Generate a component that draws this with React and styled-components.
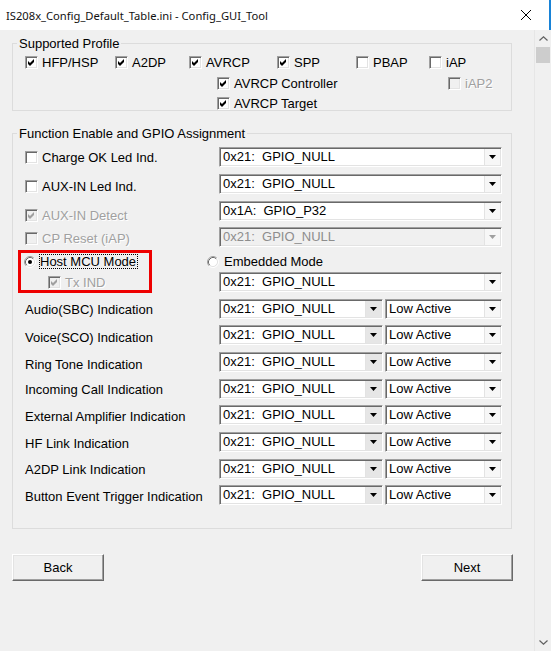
import styled, { createGlobalStyle } from "styled-components";

const GlobalStyle = createGlobalStyle`
  html, body {
    margin: 0;
    padding: 0;
    background: #f0f0f0;
  }
  body {
    font-family: "Liberation Sans", Arial, sans-serif;
    font-size: 13px;
    color: #000;
  }
`;

const Window = styled.div`
  width: 551px;
  height: 651px;
  display: flex;
  flex-direction: column;
  overflow: hidden;
  background: #f0f0f0;
`;

const TitleBar = styled.div`
  height: 30px;
  flex: none;
  display: flex;
  align-items: center;
  background: #fff;
  padding-left: 6px;
  border-right: 2px solid #1883d7;
  box-sizing: border-box;
`;

const Title = styled.div`
  flex: 1;
  font-family: "Noto Sans", sans-serif;
  font-size: 11.2px;
  color: #111;
`;

const CloseButton = styled.div`
  width: 46px;
  height: 30px;
  display: flex;
  align-items: center;
  justify-content: center;
`;

const Body = styled.div`
  flex: 1;
  display: flex;
  min-height: 0;
`;

const Content = styled.div`
  flex: 1;
  padding: 6px 0 0 12px;
`;

const Scrollbar = styled.div`
  width: 17px;
  flex: none;
  display: flex;
  flex-direction: column;
  background: #f0f0f0;
  border-left: 1px solid #e6e6e6;
  box-sizing: border-box;
`;

const ScrollArrow = styled.div`
  height: 17px;
  display: flex;
  align-items: center;
  justify-content: center;
`;

const Thumb = styled.div`
  height: 16px;
  margin: 0 1px;
  background: #cdcdcd;
`;

const Track = styled.div`
  flex: 1;
`;

const GroupBox = styled.fieldset`
  margin: ${(p) => p.$margin || 0};
  width: 500px;
  min-inline-size: 0;
  box-sizing: border-box;
  border: 1px solid #dcdcdc;
  padding: ${(p) => p.$pad};
`;

const Legend = styled.legend`
  padding: 0 2px;
  margin-left: -8px;
  line-height: 15px;
`;

const ProfileRows = styled.div`
  display: flex;
  flex-direction: column;
  gap: 8.5px;
`;

const ProfileRow = styled.div`
  display: flex;
  align-items: center;
  height: 12px;
  padding-left: ${(p) => p.$indent || 0}px;
`;

const CheckItem = styled.label`
  display: flex;
  align-items: center;
  gap: 4px;
  height: 14px;
  width: ${(p) => (p.$w ? `${p.$w}px` : "auto")};
  flex: none;
  color: ${(p) => (p.$disabled ? "#a0a0a0" : "#000")};
  text-shadow: ${(p) => (p.$disabled ? "1px 1px 0 #fff" : "none")};
  white-space: nowrap;
`;

const Box = styled.span`
  width: 13px;
  height: 13px;
  flex: none;
  box-sizing: border-box;
  display: flex;
  align-items: center;
  justify-content: center;
  border: 1px solid;
  border-color: #a0a0a0 #fff #fff #a0a0a0;
  box-shadow: inset 1px 1px 0 #696969, inset -1px -1px 0 #e3e3e3;
  background: ${(p) => (p.$disabled ? "#f0f0f0" : "#fff")};
`;

const Check = ({ label, checked, disabled, w }) => (
  <CheckItem $w={w} $disabled={disabled}>
    <Box $disabled={disabled}>
      {checked && (
        <svg width="7" height="7" viewBox="0 0 7 7">
          <polygon
            points="0,2 2,4 6,0 6,3 2,7 0,5"
            fill={disabled ? "#a0a0a0" : "#000"}
          />
        </svg>
      )}
    </Box>
    {label}
  </CheckItem>
);

const Radio = ({ checked }) => (
  <svg width="12" height="12" viewBox="0 0 12 12" style={{ flex: "none" }}>
    <circle cx="6" cy="6" r="4.5" fill="#fff" />
    <path d="M2.11 9.89 A5.5 5.5 0 0 1 9.89 2.11" fill="none" stroke="#a0a0a0" />
    <path d="M2.82 9.18 A4.5 4.5 0 0 1 9.18 2.82" fill="none" stroke="#696969" />
    <path d="M9.89 2.11 A5.5 5.5 0 0 1 2.11 9.89" fill="none" stroke="#fff" />
    <path d="M9.18 2.82 A4.5 4.5 0 0 1 2.82 9.18" fill="none" stroke="#e3e3e3" />
    {checked && <circle cx="6" cy="6" r="2" fill="#000" />}
  </svg>
);

const RadioItem = styled.label`
  display: flex;
  align-items: center;
  gap: ${(p) => p.$gap || 5}px;
  height: 16px;
  white-space: nowrap;
`;

const FocusText = styled.span`
  border: 1px dotted #000;
  padding: 0 1px 0 0;
  line-height: 13px;
`;

const FormRows = styled.div`
  display: flex;
  flex-direction: column;
  gap: 6.7px;
`;

const FormRow = styled.div`
  display: grid;
  grid-template-columns: 194px 1fr;
  align-items: center;
  height: 20px;
`;

/* labels sit a little below their combo's centre, as in the dialog */
const LabelCell = styled.div`
  display: flex;
  align-items: center;
  padding-top: ${(p) => (p.$dy || 0) * 2}px;
`;

const Label = styled.span`
  white-space: nowrap;
`;

const ModeBlock = styled.div`
  display: grid;
  grid-template-columns: 194px 1fr;
  grid-template-rows: 12px 20px;
  row-gap: 6.2px;
`;

const Highlight = styled.div`
  grid-row: 1 / span 2;
  grid-column: 1;
  justify-self: start;
  width: 134px;
  box-sizing: border-box;
  margin: -4px 0 -1px -7px;
  border: 3px solid #ee0000;
  padding: 1px 0 0 3px;
  display: flex;
  flex-direction: column;
  gap: 5px;
`;

const SubCheck = styled.div`
  height: 16px;
  display: flex;
  align-items: center;
  padding-left: 24px;
`;

const EmbeddedSlot = styled.div`
  grid-row: 1;
  grid-column: 2;
  align-self: start;
  margin: 0 0 0 -12px;
`;

const ComboSlot = styled.div`
  grid-row: 2;
  grid-column: 2;
`;

const ComboPair = styled.div`
  display: flex;
  gap: 2px;
`;

const ComboBox = styled.div`
  width: ${(p) => p.$w}px;
  height: 20px;
  box-sizing: border-box;
  display: flex;
  padding: 1px;
  border: 1px solid;
  border-color: #a0a0a0 #fff #fff #a0a0a0;
  box-shadow: inset 1px 1px 0 #696969, inset -1px -1px 0 #e3e3e3;
  background: ${(p) => (p.$disabled ? "#f0f0f0" : "#fff")};
`;

const ComboText = styled.span`
  flex: 1;
  white-space: pre;
  padding-left: 2px;
  line-height: 16px;
  overflow: hidden;
  color: ${(p) => (p.$disabled ? "#8d8d8d" : "#000")};
`;

const DropButton = styled.span`
  width: 16px;
  flex: none;
  box-sizing: border-box;
  display: flex;
  align-items: center;
  justify-content: center;
  background: ${(p) => (p.$shaded ? "#e6e6e6" : "#f7f7f7")};
  border-left: 1px solid #e3e3e3;
`;

const Combo = ({ value, w = 283, disabled, shaded }) => (
  <ComboBox $w={w} $disabled={disabled}>
    <ComboText $disabled={disabled}>{value}</ComboText>
    <DropButton $shaded={shaded}>
      <svg width="7" height="4" viewBox="0 0 7 4">
        <polygon points="0,0 7,0 3.5,4" fill={disabled ? "#a0a0a0" : "#000"} />
      </svg>
    </DropButton>
  </ComboBox>
);

const ButtonBar = styled.div`
  width: 501px;
  display: flex;
  justify-content: space-between;
  margin-top: 25px;
`;

const Button = styled.button`
  width: 92px;
  height: 27px;
  font-family: inherit;
  font-size: 13px;
  color: #000;
  background: #f0f0f0;
  box-sizing: border-box;
  border: 1px solid;
  border-color: #fff #696969 #696969 #fff;
  box-shadow: inset -1px -1px 0 #a0a0a0, inset 1px 1px 0 #e3e3e3;
  padding: 0;
`;

const Chevron = ({ up }) => (
  <svg width="9" height="5" viewBox="0 0 9 5">
    <polyline
      points={up ? "0.5,4.5 4.5,0.8 8.5,4.5" : "0.5,0.5 4.5,4.2 8.5,0.5"}
      fill="none"
      stroke="#606060"
      strokeWidth="1.2"
    />
  </svg>
);

const gpio = "0x21:  GPIO_NULL";

const indications = [
  { name: "Audio(SBC) Indication", dy: 0.5 },
  { name: "Voice(SCO) Indication", dy: 2 },
  { name: "Ring Tone Indication", dy: 2.5 },
  { name: "Incoming Call Indication", dy: 1.2 },
  { name: "External Amplifier Indication", dy: 1.2 },
  { name: "HF Link Indication", dy: 1.5 },
  { name: "A2DP Link Indication", dy: 1.2 },
  { name: "Button Event Trigger Indication", dy: 1.2 },
];

const App = () => (
  <Window>
    <GlobalStyle />
    <TitleBar>
      <Title>IS208x_Config_Default_Table.ini - Config_GUI_Tool</Title>
      <CloseButton>
        <svg width="10" height="10" viewBox="0 0 10 10">
          <path d="M0 0 L10 10 M10 0 L0 10" stroke="#000" strokeWidth="1" />
        </svg>
      </CloseButton>
    </TitleBar>
    <Body>
      <Content>
        <GroupBox $pad="5.5px 12px 0 12px">
          <Legend>Supported Profile</Legend>
          <ProfileRows>
            <ProfileRow>
              <Check w={90} checked label="HFP/HSP" />
              <Check w={74} checked label="A2DP" />
              <Check w={88} checked label="AVRCP" />
              <Check w={79} checked label="SPP" />
              <Check w={73} label="PBAP" />
              <Check label="iAP" />
            </ProfileRow>
            <ProfileRow $indent={192}>
              <Check w={231} checked label="AVRCP Controller" />
              <Check disabled label="iAP2" />
            </ProfileRow>
            <ProfileRow $indent={192}>
              <Check checked label="AVRCP Target" />
            </ProfileRow>
          </ProfileRows>
        </GroupBox>

        <GroupBox $margin="15px 0 0 0" $pad="6.5px 9px 23px 12px">
          <Legend>Function Enable and GPIO Assignment</Legend>
          <FormRows>
            <FormRow>
              <LabelCell $dy={0.5}>
                <Check label="Charge OK Led Ind." />
              </LabelCell>
              <Combo value={gpio} />
            </FormRow>
            <FormRow>
              <LabelCell $dy={2.5}>
                <Check label="AUX-IN Led Ind." />
              </LabelCell>
              <Combo value={gpio} />
            </FormRow>
            <FormRow>
              <LabelCell $dy={4}>
                <Check disabled checked label="AUX-IN Detect" />
              </LabelCell>
              <Combo value="0x1A:  GPIO_P32" />
            </FormRow>
            <FormRow>
              <LabelCell $dy={1.5}>
                <Check disabled label="CP Reset (iAP)" />
              </LabelCell>
              <Combo value={gpio} disabled />
            </FormRow>
            <ModeBlock>
              <Highlight>
                <RadioItem $gap={3}>
                  <Radio checked />
                  <FocusText>Host MCU Mode</FocusText>
                </RadioItem>
                <SubCheck>
                  <Check disabled checked label="Tx IND" />
                </SubCheck>
              </Highlight>
              <EmbeddedSlot>
                <RadioItem>
                  <Radio />
                  Embedded Mode
                </RadioItem>
              </EmbeddedSlot>
              <ComboSlot>
                <Combo value={gpio} />
              </ComboSlot>
            </ModeBlock>
            {indications.map(({ name, dy }) => (
              <FormRow key={name}>
                <LabelCell $dy={dy}>
                  <Label>{name}</Label>
                </LabelCell>
                <ComboPair>
                  <Combo value={gpio} w={164} shaded />
                  <Combo value="Low Active" w={117} />
                </ComboPair>
              </FormRow>
            ))}
          </FormRows>
        </GroupBox>

        <ButtonBar>
          <Button>Back</Button>
          <Button>Next</Button>
        </ButtonBar>
      </Content>
      <Scrollbar>
        <ScrollArrow>
          <Chevron up />
        </ScrollArrow>
        <Thumb />
        <Track />
        <ScrollArrow>
          <Chevron />
        </ScrollArrow>
      </Scrollbar>
    </Body>
  </Window>
);

export default App;
